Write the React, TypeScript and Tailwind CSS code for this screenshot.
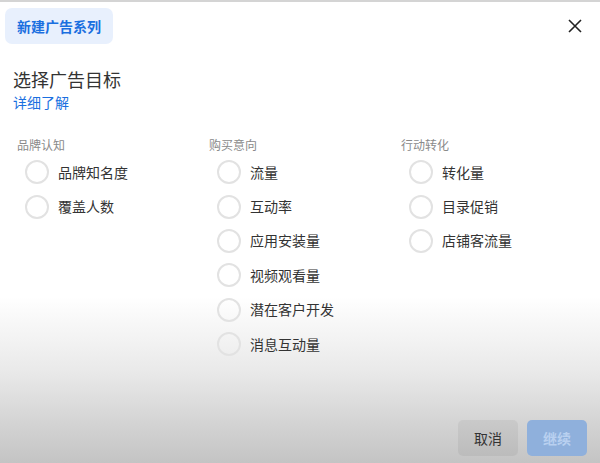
import React from 'react';

const columns = [
  { title: '品牌认知', items: ['品牌知名度', '覆盖人数'] },
  { title: '购买意向', items: ['流量', '互动率', '应用安装量', '视频观看量', '潜在客户开发', '消息互动量'] },
  { title: '行动转化', items: ['转化量', '目录促销', '店铺客流量'] },
];

const font = "font-['Noto_Sans_CJK_SC','Noto_Sans',sans-serif]";

export default function App() {
  return (
    <div
      className={`w-[600px] h-[463px] border-t-2 border-[#d4d4d4] bg-[linear-gradient(to_bottom,#ffffff_0px,#ffffff_295px,#e9e9e9_370px,#d2d2d2_425px,#c3c3c3_463px)] flex flex-col text-[#333] ${font}`}
    >
      <div className="flex items-center justify-between pl-[5px] pr-[15px] pt-[6px]">
        <div className="h-[36px] px-[12px] flex items-center rounded-[7px] bg-[#e8f0fd] text-[#1a6fe0] text-[14px] font-bold">
          新建广告系列
        </div>
        <button className="w-[20px] h-[20px] flex items-center justify-center text-[#222]">
          <svg width="16" height="16" viewBox="0 0 16 16" fill="none" stroke="currentColor" strokeWidth="1.6">
            <path d="M2 2L14 14M14 2L2 14" />
          </svg>
        </button>
      </div>

      <div className="pl-[13px] mt-[22px]">
        <h1 className="text-[18px] leading-[26px] text-[#333]">选择广告目标</h1>
        <a className="block text-[14px] leading-[20px] text-[#1a6fe0]">详细了解</a>
      </div>

      <div className="grid grid-cols-[192px_192px_1fr] pl-[17px] mt-[25px]">
        {columns.map((col) => (
          <div key={col.title} className="flex flex-col">
            <div className="text-[12px] leading-[16px] text-[#8a8a8a]">{col.title}</div>
            <div className="flex flex-col mt-[2px]">
              {col.items.map((item) => (
                <label key={item} className="flex items-center h-[34.4px] pl-[8px]">
                  <span className="w-[24px] h-[24px] rounded-full border-2 border-[#e2e2e2] shrink-0" />
                  <span className="ml-[9px] text-[14px] text-[#333]">{item}</span>
                </label>
              ))}
            </div>
          </div>
        ))}
      </div>

      <div className="mt-auto flex justify-end gap-[9px] pr-[13px] pb-[7px]">
        <button className="w-[60px] h-[36px] rounded-[5px] bg-black/[0.05] text-[14px] text-[#333]">取消</button>
        <button className="w-[60px] h-[36px] rounded-[5px] bg-[#8fb0dc] text-[14px] font-bold text-[#b9d0f0]">继续</button>
      </div>
    </div>
  );
}
